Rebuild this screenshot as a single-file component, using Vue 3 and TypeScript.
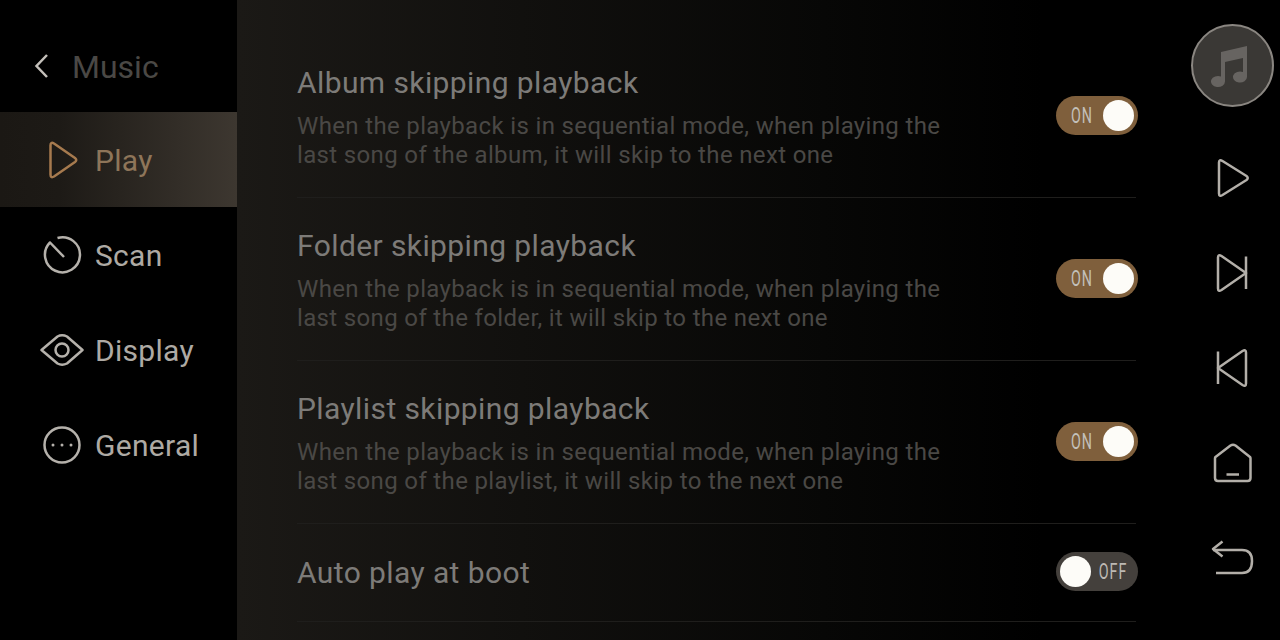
<script setup lang="ts">
interface NavItem {
  label: string
  icon: string
}

interface Setting {
  title: string
  lines: string[]
  on: boolean
}

const navItems: NavItem[] = [
  { label: 'Play', icon: 'play' },
  { label: 'Scan', icon: 'scan' },
  { label: 'Display', icon: 'eye' },
  { label: 'General', icon: 'more' },
]

const desc = (kind: string) => [
  'When the playback is in sequential mode, when playing the',
  `last song of the ${kind}, it will skip to the next one`,
]

const settings: Setting[] = [
  { title: 'Album skipping playback', lines: desc('album'), on: true },
  { title: 'Folder skipping playback', lines: desc('folder'), on: true },
  { title: 'Playlist skipping playback', lines: desc('playlist'), on: true },
  { title: 'Auto play at boot', lines: [], on: false },
]
</script>

<template>
  <div class="screen">
    <aside class="sidebar">
      <header class="back">
        <svg class="chevron" width="18" height="26" viewBox="0 0 18 26">
          <path d="M14 2 L3.500 13 L14 24" />
        </svg>
        <span>Music</span>
      </header>
      <nav>
        <div
          v-for="(item, i) in navItems"
          :key="item.label"
          class="nav-item"
          :class="{ active: i === 0 }"
        >
          <svg class="nav-icon" width="44" height="44" viewBox="0 0 44 44">
            <path v-if="item.icon === 'play'" d="M10.500 7.500 Q10.500 3.500 14 5.500 L35 20 Q37.500 22 35 24 L14 38.500 Q10.500 40.500 10.500 36.500 Z" />
            <path v-else-if="item.icon === 'scan'" d="M17.500 5 A17.500 17.500 0 1 1 10 9.500 L24 24" />
            <template v-else-if="item.icon === 'eye'">
              <path d="M1 22 L17 8.500 Q21.500 6 26.500 8.500 L42 22 L26.500 35.500 Q21.500 38 17 35.500 Z" transform="translate(0.500 0)" />
              <circle cx="22" cy="22" r="6.500" />
            </template>
            <template v-else>
              <circle cx="22" cy="22" r="17.500" />
              <circle class="dot" cx="13" cy="22" r="1.500" />
              <circle class="dot" cx="22" cy="22" r="1.500" />
              <circle class="dot" cx="31" cy="22" r="1.500" />
            </template>
          </svg>
          <span class="nav-label">{{ item.label }}</span>
        </div>
      </nav>
    </aside>

    <main class="content">
      <section
        v-for="s in settings"
        :key="s.title"
        class="row"
        :class="{ short: s.lines.length === 0 }"
      >
        <div class="text">
          <div class="title">{{ s.title }}</div>
          <div v-if="s.lines.length" class="desc">
            <div v-for="line in s.lines" :key="line">{{ line }}</div>
          </div>
        </div>
        <div class="toggle" :class="{ on: s.on }">
          <span class="knob"></span>
          <span class="toggle-label">{{ s.on ? 'ON' : 'OFF' }}</span>
        </div>
      </section>
    </main>

    <aside class="rail">
      <div class="now-playing">
        <svg width="44" height="44" viewBox="0 0 44 44">
          <path d="M11 8 L37 2 V33 A7 5.500 0 1 1 33 28 V14 L15 18 V37.500 A7 5.500 0 1 1 11 32.500 Z" />
        </svg>
      </div>
      <div class="rail-btn">
        <svg width="44" height="44" viewBox="0 0 44 44">
          <path d="M8 6.500 Q8 3 11.500 5 L35.500 20 Q38 22 35.500 24 L11.500 39 Q8 41 8 37.500 Z" />
        </svg>
      </div>
      <div class="rail-btn">
        <svg width="44" height="44" viewBox="0 0 44 44">
          <path d="M7 6.500 Q7 3 10.500 5 L35 22 L10.500 39 Q7 41 7 37.500 Z" />
          <path d="M35 5.500 V38" />
        </svg>
      </div>
      <div class="rail-btn">
        <svg width="44" height="44" viewBox="0 0 44 44">
          <path d="M35 6.500 Q35 3 31.500 5 L7 22 L31.500 39 Q35 41 35 37.500 Z" />
          <path d="M7 5.500 V38" />
        </svg>
      </div>
      <div class="rail-btn">
        <svg width="44" height="44" viewBox="0 0 44 44">
          <path d="M19.500 4.500 Q22 3 24.500 4.500 L39 16 Q39.500 16.500 39.500 17.500 V37 Q39.500 40 36.500 40 H7 Q4 40 4 37 V17.500 Q4 16.500 4.500 16 Z" />
          <path d="M15.500 33.500 H28" />
        </svg>
      </div>
      <div class="rail-btn">
        <svg width="44" height="44" viewBox="0 0 44 44">
          <path d="M2 14 H31 Q41 14 41 25 Q41 37 31 37 H5" />
          <path d="M11.500 5.500 L2 13 L11.500 20.500" />
        </svg>
      </div>
    </aside>
  </div>
</template>

<style scoped>
.screen {
  display: flex;
  width: 1280px;
  height: 640px;
  overflow: hidden;
  background: #000;
  font-family: Roboto, "Liberation Sans", sans-serif;
}

.sidebar {
  flex: 0 0 237px;
  background: #000;
}

.back {
  display: flex;
  align-items: center;
  gap: 21px;
  height: 112px;
  padding: 22px 0 0 33px;
  box-sizing: border-box;
  font-size: 32px;
  color: #4a4845;
}

.chevron {
  margin-top: -3px;
  fill: none;
  stroke: #c4c0ba;
  stroke-width: 2.500;
}

.nav-item {
  display: flex;
  align-items: center;
  gap: 11px;
  height: 95px;
  padding-left: 40px;
  font-size: 30px;
  letter-spacing: 0.300px;
  color: #aeaaa4;
}

.nav-label {
  padding-top: 2px;
}

.nav-item.active {
  color: #8e7559;
  background: linear-gradient(90deg, #1b1814 0%, #1d1a16 25%, #3d3730 100%);
}

.nav-icon {
  flex: none;
  fill: none;
  stroke: #b5b1ab;
  stroke-width: 2.500;
  stroke-linejoin: round;
}

.active .nav-icon {
  stroke: #a67a4e;
}

.nav-icon .dot {
  fill: #b5b1ab;
  stroke: none;
}

.content {
  flex: 0 0 948px;
  box-sizing: border-box;
  padding: 35px 49px 0 60px;
  background: linear-gradient(90deg, #1b1916 0%, #11100e 30%, #070706 62%, #000 85%);
}

.row {
  display: flex;
  align-items: center;
  justify-content: space-between;
  box-sizing: border-box;
  height: 163px;
  padding-bottom: 2px;
  border-bottom: 1px solid #1f1e1c;
}

.row.short {
  height: 98px;
}

.text {
  margin-top: 6px;
}

.short .text {
  margin-top: 3px;
}

.title {
  font-size: 30px;
  line-height: 34px;
  letter-spacing: 0.400px;
  color: #7d7b78;
}

.desc {
  margin-top: 12px;
  font-size: 24px;
  line-height: 29px;
  letter-spacing: 0.350px;
  color: #4a4845;
}

.toggle {
  display: flex;
  flex: none;
  align-items: center;
  box-sizing: border-box;
  width: 82px;
  height: 39px;
  margin-right: -2px;
  padding: 0 4px;
  border-radius: 20px;
  background: #44403c;
}

.toggle.on {
  flex-direction: row-reverse;
  justify-content: flex-start;
  gap: 4px;
  background: #7f5f3c;
}

.knob {
  flex: none;
  width: 31px;
  height: 31px;
  border-radius: 50%;
  background: #fdfcf8;
}

.toggle-label {
  font-size: 22px;
  letter-spacing: 1.500px;
  transform: scaleX(0.65);
  color: #bdb9b3;
}

.toggle.on .toggle-label {
  color: #c3c0ba;
}

.rail {
  display: flex;
  flex: 0 0 95px;
  flex-direction: column;
  align-items: center;
  padding-top: 24px;
}

.now-playing {
  display: flex;
  align-items: center;
  justify-content: center;
  box-sizing: border-box;
  width: 83px;
  height: 83px;
  margin-left: -1px;
  margin-bottom: 23px;
  border: 2px solid #8a8681;
  border-radius: 50%;
  background: #3a3835;
}

.now-playing svg {
  fill: #676461;
}

.rail-btn {
  display: flex;
  align-items: center;
  justify-content: center;
  flex: none;
  width: 95px;
  height: 95px;
  margin-left: 0;
}

.rail-btn svg {
  fill: none;
  stroke: #b3afa9;
  stroke-width: 2.500;
  stroke-linejoin: round;
}
</style>
